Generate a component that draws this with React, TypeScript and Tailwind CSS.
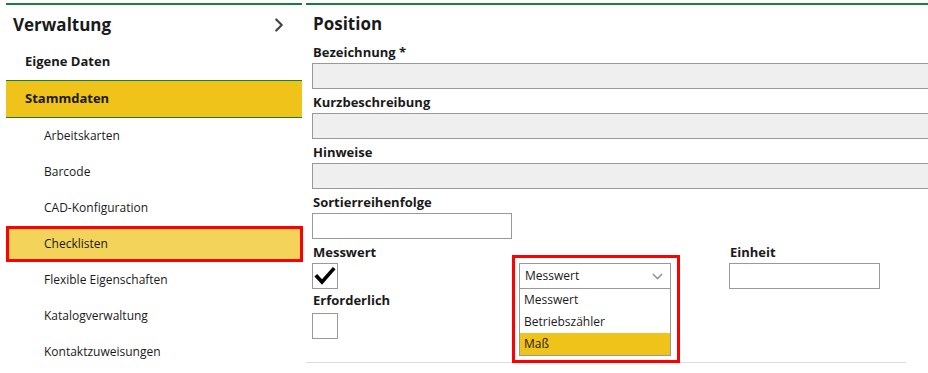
import { ChevronRight, ChevronDown } from "lucide-react";

const subItems = [
  "Arbeitskarten",
  "Barcode",
  "CAD-Konfiguration",
  "Checklisten",
  "Flexible Eigenschaften",
  "Katalogverwaltung",
  "Kontaktzuweisungen",
];

function Field({ label, wide = true }: { label: string; wide?: boolean }) {
  return (
    <div className="flex flex-col pb-[4px]">
      <div className="h-[20px] flex items-center pl-[1px] text-[13px] font-bold text-[#1a1a1a]">
        {label}
      </div>
      <div
        className={`h-[26px] border border-[#999] ${
          wide ? "w-[700px] bg-[#efefef]" : "w-[200px] bg-white"
        }`}
      />
    </div>
  );
}

export default function App() {
  const selected = "Checklisten";

  return (
    <div
      className="w-[928px] h-[373px] overflow-hidden bg-white flex pl-[6px] pt-[3px] text-[#1a1a1a]"
      style={{ fontFamily: '"Open Sans", "Noto Sans", sans-serif' }}
    >
      {/* sidebar */}
      <div className="w-[296px] shrink-0 border-t-2 border-[#157f3c] flex flex-col">
        <div className="h-[39px] flex items-center justify-between pl-[7px] pr-[12px]">
          <span className="text-[17px] font-bold">Verwaltung</span>
          <ChevronRight className="w-[22px] h-[22px] text-[#444]" strokeWidth={2.4} />
        </div>
        <div className="h-[36px] flex items-center pl-[19px] text-[13px] font-bold">
          Eigene Daten
        </div>
        <div className="h-[38px] flex items-center pl-[19px] text-[13px] font-bold bg-[#f0c31a] border-y border-[#157f3c]">
          Stammdaten
        </div>
        {subItems.map((item) =>
          item === selected ? (
            <div
              key={item}
              className="h-[36px] flex items-center pl-[35px] text-[12px] bg-[#f3d35a] border-[3px] border-[#ff0000] w-[297px]"
            >
              {item}
            </div>
          ) : (
            <div key={item} className="h-[36px] flex items-center pl-[38px] text-[12px]">
              {item}
            </div>
          ),
        )}
      </div>

      {/* form */}
      <div className="ml-[4px] flex-1 min-w-0 border-t-2 border-[#157f3c] flex flex-col pl-[6px]">
        <div className="h-[38px] flex items-center pl-[1px] text-[17px] font-bold">
          Position
        </div>
        <Field label="Bezeichnung *" />
        <Field label="Kurzbeschreibung" />
        <Field label="Hinweise" />
        <Field label="Sortierreihenfolge" wide={false} />

        <div className="flex">
          <div className="w-[207px] flex flex-col">
            <div className="h-[20px] flex items-center pl-[1px] text-[13px] font-bold">
              Messwert
            </div>
            <div className="w-[26px] h-[26px] border border-[#999] bg-white flex items-center justify-center">
              <svg width="22" height="22" viewBox="0 0 22 22">
                <path
                  d="M3 11.5 L8 17 L19 4.5"
                  fill="none"
                  stroke="#000"
                  strokeWidth="3.6"
                  strokeLinecap="square"
                />
              </svg>
            </div>
            <div className="h-[24px] flex items-center pl-[1px] text-[13px] font-bold">
              Erforderlich
            </div>
            <div className="w-[26px] h-[26px] border border-[#999] bg-white" />
          </div>

          <div className="w-[210px] pt-[20px]">
            <div className="relative w-[152px]">
              <div className="h-[26px] border border-[#999] bg-white flex items-center justify-between pl-[5px] pr-[4px] text-[12px]">
                <span>Messwert</span>
                <ChevronDown className="w-[17px] h-[17px] text-[#999]" strokeWidth={2} />
              </div>
              <div className="absolute left-0 top-[25px] w-[152px] border border-[#999] bg-white text-[12px] z-10">
                <div className="h-[22px] flex items-center pl-[4px]">Messwert</div>
                <div className="h-[22px] flex items-center pl-[4px]">Betriebszähler</div>
                <div className="h-[22px] flex items-center pl-[4px] bg-[#f0c31a]">Maß</div>
              </div>
              <div className="absolute left-[-7px] top-[-8px] w-[168px] h-[108px] border-[3px] border-[#ff0000] z-20 pointer-events-none" />
            </div>
          </div>

          <div className="flex flex-col">
            <div className="h-[20px] flex items-center pl-[1px] text-[13px] font-bold">
              Einheit
            </div>
            <div className="w-[151px] h-[26px] border border-[#999] bg-white" />
          </div>
        </div>

        <div className="mt-[23px] ml-[-6px] w-[600px] border-t border-[#ddd]" />
      </div>
    </div>
  );
}
